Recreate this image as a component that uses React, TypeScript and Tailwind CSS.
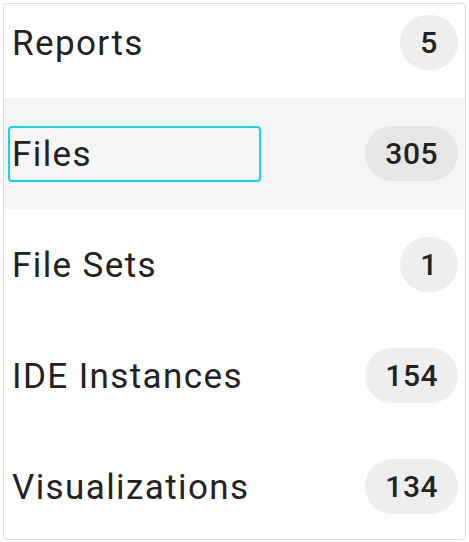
import React from "react";

const items = [
  { label: "Reports", count: "5" },
  { label: "Files", count: "305", active: true },
  { label: "File Sets", count: "1" },
  { label: "IDE Instances", count: "154" },
  { label: "Visualizations", count: "134" },
];

export default function App() {
  return (
    <div className="w-[469px] h-[542px] bg-white p-[3px]" style={{ fontFamily: "Roboto, 'Liberation Sans', sans-serif" }}>
      <div className="h-[537px] border border-[#dcdcdc] rounded-[4px] overflow-hidden bg-white">
        <div className="mt-[-17px] flex flex-col">
          {items.map((it) => (
            <div
              key={it.label}
              className={`h-[111px] shrink-0 flex items-center justify-between pl-[4px] pr-[7px] ${it.active ? "bg-[#f5f5f5]" : ""}`}
            >
              <div
                className={`flex items-center h-[56px] w-[253px] pl-[2px] pt-[2px] rounded-[4px] border-2 ${it.active ? "border-[#12d6ec]" : "border-transparent"}`}
              >
                <span className="text-[35px] leading-none text-[#222222] tracking-[1.4px] whitespace-nowrap">{it.label}</span>
              </div>
              <div
                className={`h-[55px] min-w-[58px] px-[20px] rounded-full flex items-center justify-center text-[30px] font-medium tracking-[0.5px] text-[#222222] ${it.active ? "bg-[#e6e6e6]" : "bg-[#eeeeee]"}`}
              >
                {it.count}
              </div>
            </div>
          ))}
        </div>
      </div>
    </div>
  );
}
